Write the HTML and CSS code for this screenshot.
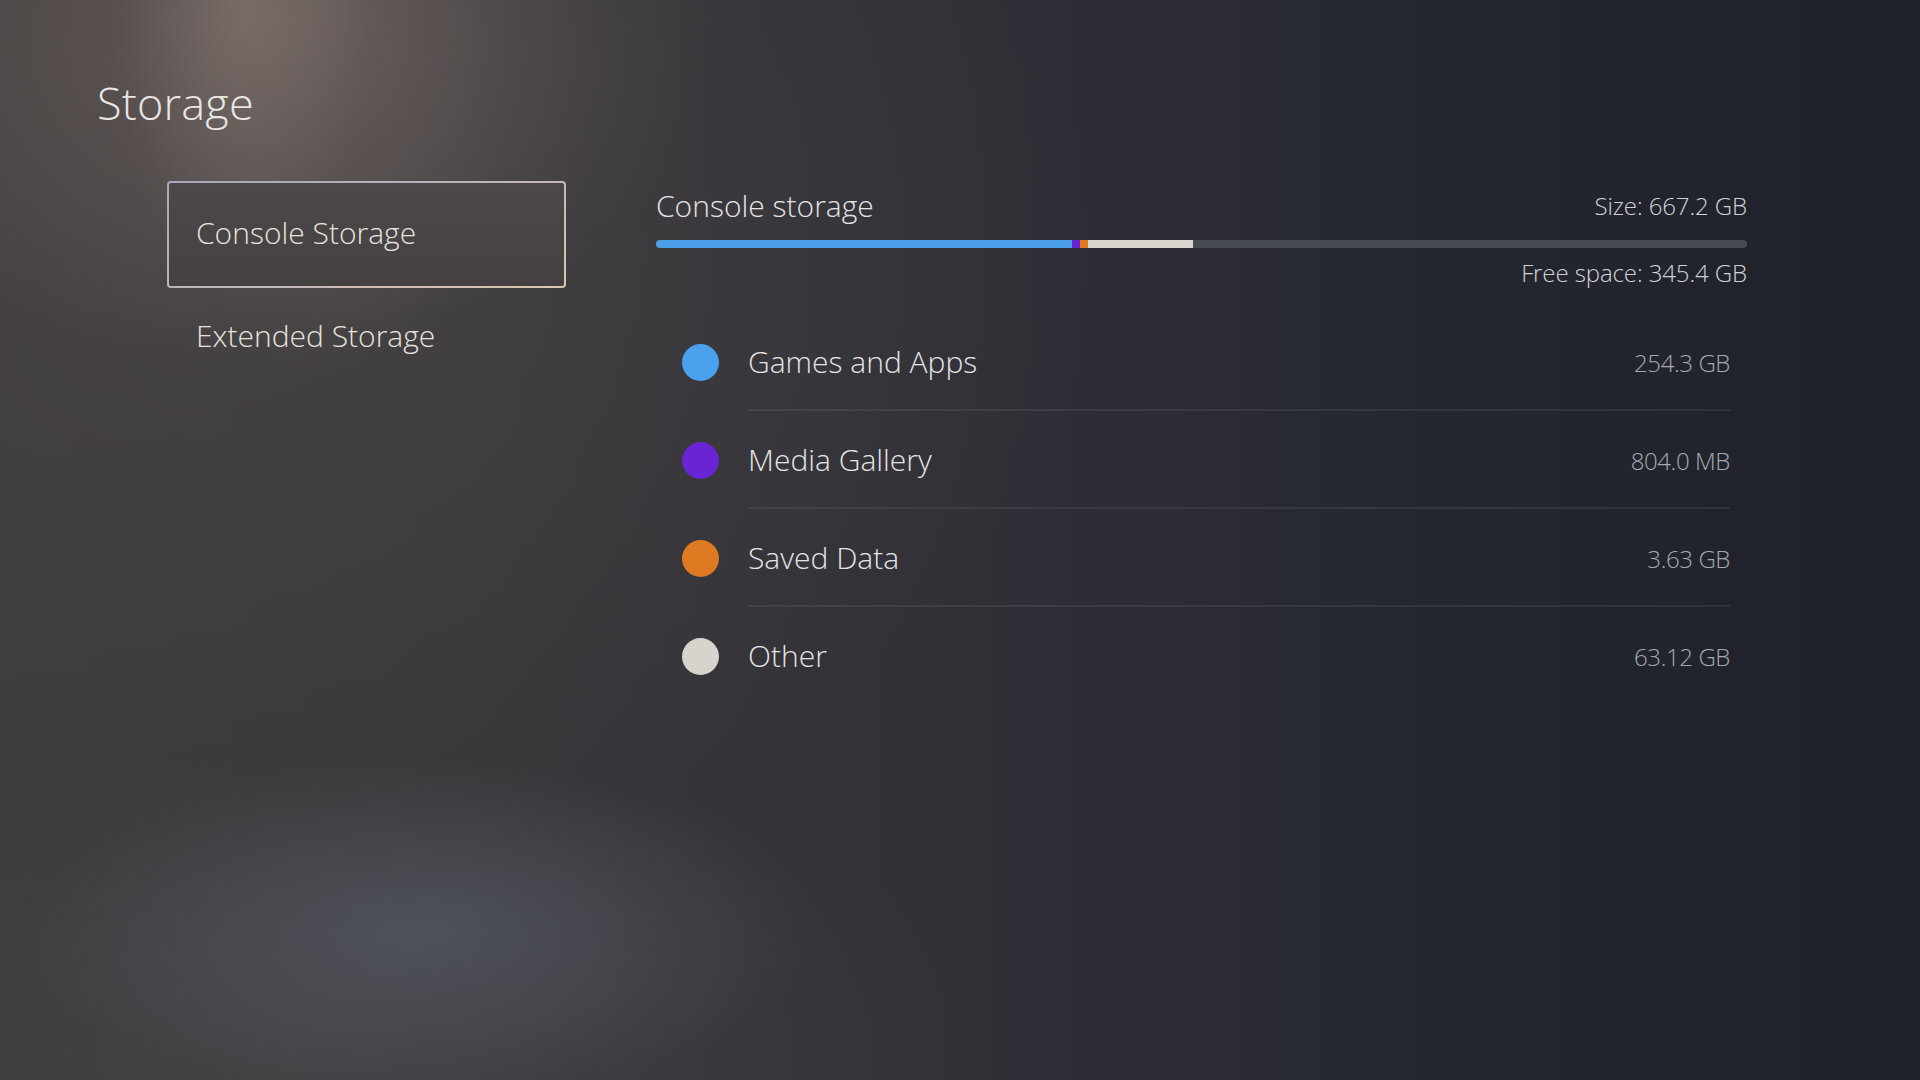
FILE: index.html
```html
<!DOCTYPE html>
<html lang="en">
<head>
<meta charset="utf-8">
<title>Storage</title>
<link rel="stylesheet" href="styles.css">
</head>
<body>
<div class="screen">
  <h1 class="title">Storage</h1>
  <div class="main">
    <nav class="nav">
      <div class="nav-item is-selected">Console Storage</div>
      <div class="nav-item">Extended Storage</div>
    </nav>
    <section class="panel">
      <div class="panel-head">
        <span class="panel-title">Console storage</span>
        <span class="panel-meta">Size: 667.2 GB</span>
      </div>
      <div class="bar">
        <span class="seg seg-games" style="width:416px"></span>
        <span class="seg seg-media" style="width:8px"></span>
        <span class="seg seg-saved" style="width:8px"></span>
        <span class="seg seg-other" style="width:105px"></span>
      </div>
      <div class="panel-free">Free space: 345.4 GB</div>
      <ul class="list">
        <li class="row">
          <span class="dot dot-games"></span>
          <div class="row-body"><span class="label">Games and Apps</span><span class="value">254.3 GB</span></div>
        </li>
        <li class="row">
          <span class="dot dot-media"></span>
          <div class="row-body"><span class="label">Media Gallery</span><span class="value">804.0 MB</span></div>
        </li>
        <li class="row">
          <span class="dot dot-saved"></span>
          <div class="row-body"><span class="label">Saved Data</span><span class="value">3.63 GB</span></div>
        </li>
        <li class="row">
          <span class="dot dot-other"></span>
          <div class="row-body"><span class="label">Other</span><span class="value">63.12 GB</span></div>
        </li>
      </ul>
    </section>
  </div>
</div>
</body>
</html>
```
FILE: styles.css
```css
* { box-sizing: border-box; }

html, body {
  margin: 0;
  padding: 0;
  width: 1920px;
  height: 1080px;
  overflow: hidden;
  background: #2c2c32;
}

.screen {
  width: 1920px;
  height: 1080px;
  font-family: "Open Sans", "Noto Sans", sans-serif;
  font-weight: 300;
  color: #e6e4e2;
  background:
    radial-gradient(ellipse 130px 300px at 240px 0px, rgba(180, 162, 152, 0.22), rgba(180, 162, 152, 0) 100%),
    radial-gradient(ellipse 200px 380px at 330px 0px, rgba(165, 148, 138, 0.14), rgba(165, 148, 138, 0) 100%),
    radial-gradient(ellipse 460px 340px at 260px 20px, rgba(140, 122, 115, 0.42), rgba(140, 122, 115, 0) 100%),
    radial-gradient(ellipse 900px 620px at 200px 250px, rgba(85, 78, 78, 0.45), rgba(85, 78, 78, 0) 100%),
    radial-gradient(ellipse 400px 170px at 420px 930px, rgba(100, 110, 125, 0.42), rgba(100, 110, 125, 0) 100%),
    radial-gradient(ellipse 700px 300px at 300px 1050px, rgba(80, 75, 80, 0.5), rgba(80, 75, 80, 0) 100%),
    linear-gradient(90deg, #3c3a3b 0%, #38373a 25%, #303037 50%, #262831 72%, #1f212a 100%);
}

.title {
  margin: 0;
  padding: 75px 0 0 97px;
  font-size: 45px;
  line-height: 56px;
  font-weight: 300;
  color: #e8e6e4;
  letter-spacing: 0.2px;
}

.main {
  display: flex;
  align-items: flex-start;
  gap: 90px;
  padding: 50px 0 0 167px;
}

.nav {
  width: 399px;
  display: flex;
  flex-direction: column;
}

.nav-item {
  display: flex;
  align-items: center;
  height: 107px;
  padding: 0 0 5px 29px;
  font-size: 30px;
  color: #e6e2dd;
}

.nav-item + .nav-item {
  height: 100px;
}

.nav-item.is-selected {
  padding-left: 27px;
  border: 2px solid transparent;
  border-radius: 4px;
  background:
    linear-gradient(180deg, #4d4748 0%, #484344 60%, #454142 100%) padding-box,
    linear-gradient(160deg, #a7a6bb 0%, #bdb3bb 45%, #dcc7ad 100%) border-box;
}

.panel {
  width: 1091px;
  display: flex;
  flex-direction: column;
}

.panel-head {
  display: flex;
  align-items: center;
  justify-content: space-between;
  height: 40px;
  margin-top: 4px;
}

.panel-title {
  font-size: 30px;
  color: #e4e3e3;
}

.panel-meta,
.panel-free {
  font-size: 24px;
  color: #d2d2d6;
  letter-spacing: -0.1px;
}

.bar {
  display: flex;
  height: 8px;
  margin-top: 15px;
  border-radius: 4px;
  overflow: hidden;
  background: #484a53;
}

.seg { display: block; height: 100%; }
.seg-games { background: #4a9fe8; }
.seg-media { background: #6a22d2; }
.seg-saved { background: #e07820; }
.seg-other { background: #d8d6ce; }

.panel-free {
  height: 36px;
  line-height: 36px;
  margin-top: 7px;
  text-align: right;
}

.list {
  list-style: none;
  margin: 22px 0 0;
  padding: 0 17px 0 26px;
}

.row {
  display: flex;
  align-items: stretch;
  height: 98px;
  gap: 29px;
}

.dot {
  align-self: center;
  width: 37px;
  height: 37px;
  border-radius: 50%;
  flex: none;
}
.dot-games { background: #4aa2ee; }
.dot-media { background: #6a24d4; }
.dot-saved { background: #de7a22; }
.dot-other { background: #d6d4cd; }

.row-body {
  flex: 1;
  display: flex;
  align-items: center;
  justify-content: space-between;
  border-bottom: 2px solid rgba(255, 255, 255, 0.07);
}

.row:last-child .row-body {
  border-bottom-color: transparent;
}

.label {
  font-size: 30px;
  color: #e4e4e6;
}

.value {
  font-size: 24px;
  color: #a8a9ae;
  letter-spacing: -0.4px;
  padding-top: 2px;
}
```
